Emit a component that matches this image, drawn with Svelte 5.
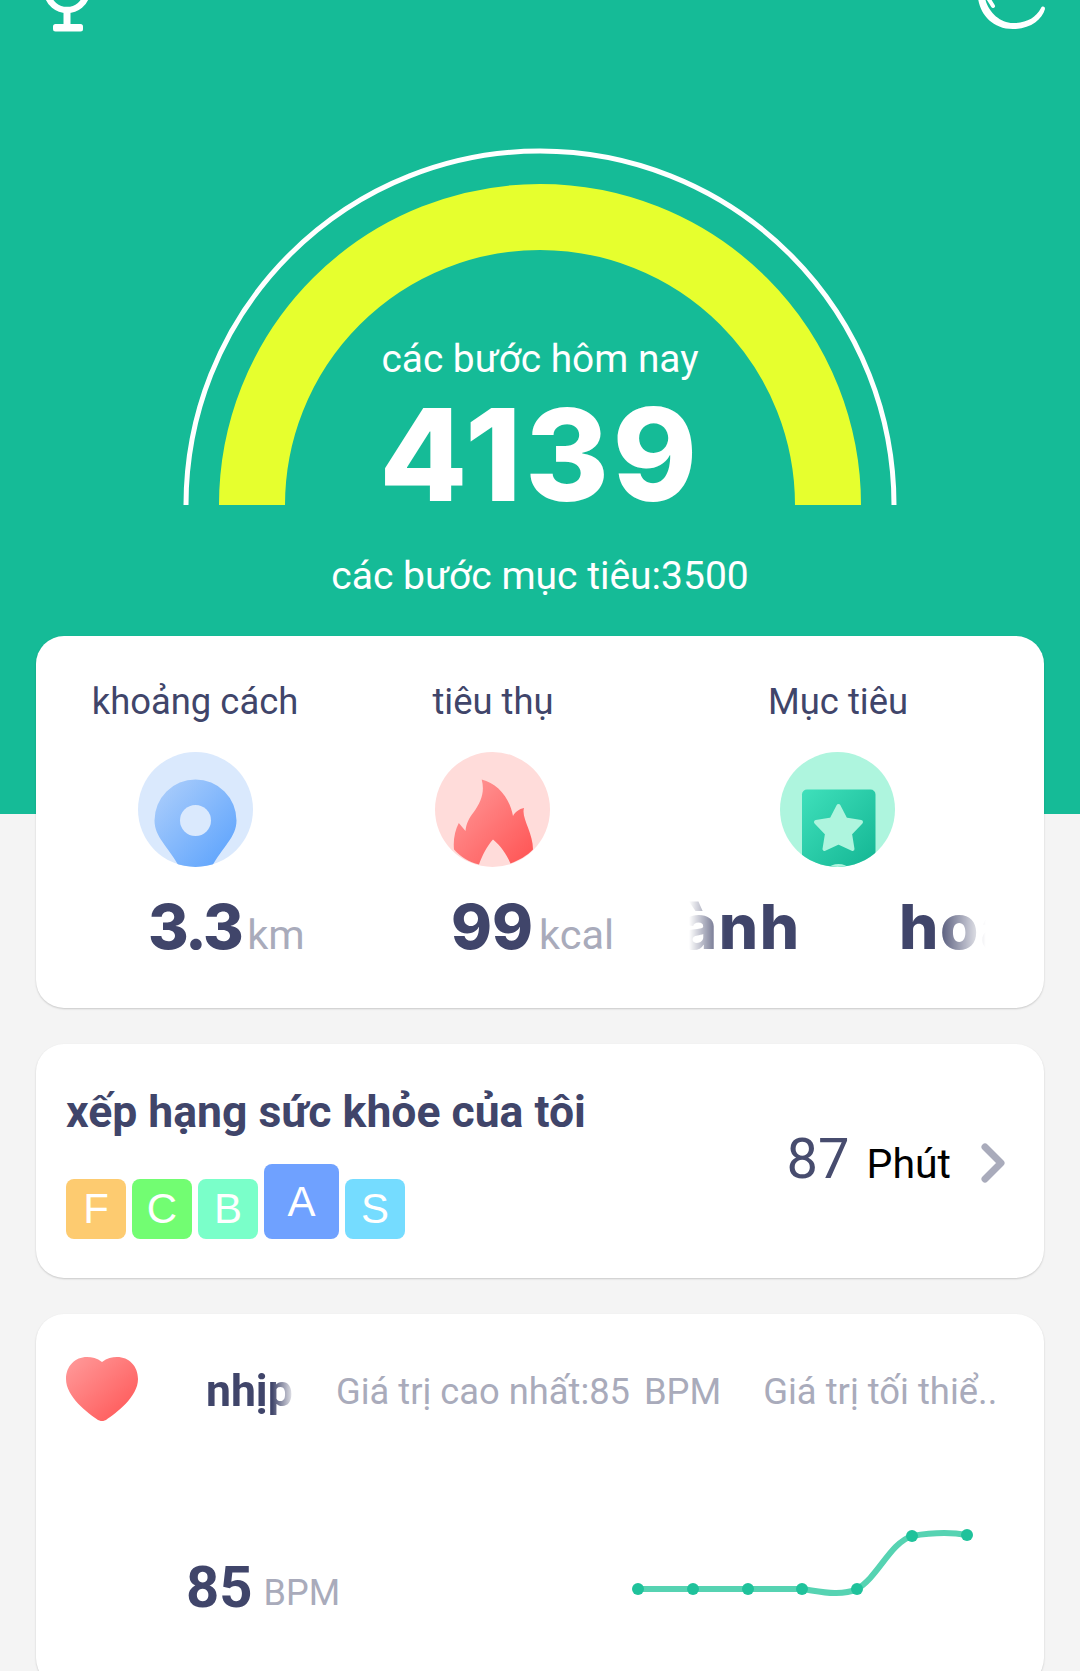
<script>
	const linePts = [
		[10, 64],
		[65, 64],
		[120, 64],
		[174, 64],
		[229, 64],
		[284, 11],
		[339, 10]
	];
</script>

<div class="page">
	<header class="hero">
		<div class="top">
			<svg width="48" height="32" viewBox="0 0 48 32" aria-hidden="true">
				<path d="M4.5 -6 C6 3 14 10 24 10 C34 10 42 3 43.5 -6" fill="none" stroke="#fff" stroke-width="6.5" />
				<path d="M24 10 V26" stroke="#fff" stroke-width="7" />
				<rect x="10" y="24" width="30" height="7.5" rx="2.5" fill="#fff" />
			</svg>
			<svg width="68" height="32" viewBox="0 0 68 32" aria-hidden="true">
				<path d="M0 -2 C2 14 14 29 35 29 C52 29 64 20 67 9 C67 6 64 6 63 8 C58 18 48 23 35 23 C22 23 10 12 7 -2 Z" fill="#fff" />
				<path d="M10 -2 L15 6" stroke="#fff" stroke-width="4" stroke-linecap="round" />
			</svg>
		</div>
		<div class="gauge">
			<svg width="720" height="366" viewBox="0 0 720 366" aria-hidden="true">
				<path d="M6 365 A354 354 0 0 1 714 365" fill="none" stroke="#fff" stroke-width="5" />
				<path d="M72 365 A288 288 0 0 1 648 365" fill="none" stroke="#e6ff2e" stroke-width="66" />
			</svg>
			<div class="gauge-text">
				<div class="today">các bước hôm nay</div>
				<div class="steps">4139</div>
			</div>
		</div>
		<div class="goal">các bước mục tiêu:3500</div>
	</header>

	<main class="cards">
		<section class="card stats">
			<div class="stat">
				<div class="label">khoảng cách</div>
				<svg class="circle" width="115" height="115" viewBox="0 0 115 115" aria-hidden="true">
					<defs>
						<clipPath id="c1"><circle cx="57.5" cy="57.5" r="57.5" /></clipPath>
						<linearGradient id="g1" x1="0" y1="0" x2="1" y2="1">
							<stop offset="0" stop-color="#b0d0fb" />
							<stop offset="1" stop-color="#57a0fd" />
						</linearGradient>
						<linearGradient id="g2" x1="0" y1="0" x2="1" y2="1">
							<stop offset="0" stop-color="#ff9c9c" />
							<stop offset="1" stop-color="#ff5252" />
						</linearGradient>
						<linearGradient id="g3" x1="0" y1="0" x2="1" y2="1">
							<stop offset="0" stop-color="#3fe0bb" />
							<stop offset="1" stop-color="#13b593" />
						</linearGradient>
					</defs>
					<circle cx="57.5" cy="57.5" r="57.5" fill="#dae9fd" />
					<g clip-path="url(#c1)">
						<path d="M57.5 27.5 a41 41 0 0 1 41 41 c0 17 -14 26 -25 47 h-32 c-11 -21 -25 -30 -25 -47 a41 41 0 0 1 41 -41z" fill="url(#g1)" />
						<circle cx="57.5" cy="68.5" r="15.5" fill="#dae9fd" />
					</g>
				</svg>
				<div class="value v1"><b>3.3</b><span>km</span></div>
			</div>
			<div class="stat">
				<div class="label">tiêu thụ</div>
				<svg class="circle" width="115" height="115" viewBox="0 0 115 115" aria-hidden="true">
					<circle cx="57.5" cy="57.5" r="57.5" fill="#ffdcda" />
					<path d="M46.7 27.5 C62 31 75 46 78 64 C80 60 84 57 89 56 C86 66 98 80 98 97.5 C92 104 84 108 75.5 111.5 C72 103 66 94 58 87.5 C52 94 47 104 44 112.5 C34 110 26 105 19 97.5 C18 88 20 78 23.8 71 L30.5 79 C31 72 34 66 38.8 60 C46 50 50 40 46.7 27.5 Z" fill="url(#g2)" />
				</svg>
				<div class="value v2"><b>99</b><span>kcal</span></div>
			</div>
			<div class="stat">
				<div class="label">Mục tiêu</div>
				<svg class="circle" width="115" height="115" viewBox="0 0 115 115" aria-hidden="true">
					<defs>
						<clipPath id="c3"><circle cx="57.5" cy="57.5" r="57.5" /></clipPath>
					</defs>
					<circle cx="57.5" cy="57.5" r="57.5" fill="#aef5de" />
					<g clip-path="url(#c3)">
						<path d="M22 42.5 a5 5 0 0 1 5 -5 h63.5 a5 5 0 0 1 5 5 V116 H22 Z" fill="url(#g3)" />
						<ellipse cx="58.5" cy="116" rx="9" ry="4" fill="#aef5de" />
					</g>
					<path d="M58.5 54 L65.5 67.5 L81 70 L70 81.5 L72.5 97 L58.5 90.5 L44.5 97 L47 81.5 L36 70 L51.5 67.5 Z" fill="#aef5de" stroke="#aef5de" stroke-width="4" stroke-linejoin="round" />
				</svg>
				<div class="marquee"><div class="marquee-in">thành<i></i>hoàn</div></div>
			</div>
		</section>

		<section class="card rank">
			<div>
				<h2>xếp hạng sức khỏe của tôi</h2>
				<div class="badges">
					<span class="badge f">F</span>
					<span class="badge c">C</span>
					<span class="badge b">B</span>
					<span class="badge a">A</span>
					<span class="badge s">S</span>
				</div>
			</div>
			<div class="mins">
				<span class="num">87</span>
				<span class="unit">Phút</span>
				<svg width="24" height="40" viewBox="0 0 24 40" aria-hidden="true">
					<path d="M4 4 L20 20 L4 36" fill="none" stroke="#a9abbb" stroke-width="7" stroke-linecap="round" stroke-linejoin="round" />
				</svg>
			</div>
		</section>

		<section class="card heart">
			<div class="h-row">
				<svg class="heart-ic" width="72" height="64" viewBox="0 0 72 64" aria-hidden="true">
					<defs>
						<linearGradient id="g4" x1="0" y1="0" x2="1" y2="1">
							<stop offset="0" stop-color="#ff9c9c" />
							<stop offset="1" stop-color="#ff5252" />
						</linearGradient>
					</defs>
					<path d="M36 5 C41 1 46 0 51 0 C63 0 72 9 72 22 C72 40 50 56 40 63 C37 64.5 35 64.5 32 63 C22 56 0 40 0 22 C0 9 9 0 21 0 C26 0 31 1 36 5 Z" fill="url(#g4)" />
				</svg>
				<div class="h-name">nhịp</div>
				<div class="h-max">Giá trị cao nhất:85<span>BPM</span></div>
				<div class="h-min">Giá trị tối thiể..</div>
			</div>
			<div class="h-body">
				<div class="bpm"><b>85</b><span>BPM</span></div>
				<svg class="chart" width="350" height="80" viewBox="0 0 350 80" aria-hidden="true">
					<path d="M10 64 H174 C190 66 212 72 229 64 C250 52 262 18 284 11 C302 8 322 7 339 10" fill="none" stroke="#56d3b2" stroke-width="6" />
					{#each linePts as [x, y]}
						<circle cx={x} cy={y} r="6" fill="#1fc29b" />
					{/each}
				</svg>
			</div>
		</section>
	</main>
</div>

<style>
	:global(body) {
		margin: 0;
		background: #f4f4f4;
	}

	.page {
		width: 1080px;
		height: 1671px;
		overflow: hidden;
		font-family: Roboto, "Noto Sans", sans-serif;
		color: #40456a;
	}

	.hero {
		height: 814px;
		background: #15bb97;
		color: #fff;
		text-align: center;
	}

	.top {
		display: flex;
		justify-content: space-between;
		align-items: flex-start;
		padding: 0 34px 0 43px;
		height: 65px;
	}

	.gauge {
		display: grid;
		justify-content: center;
		margin-top: 75px;
	}

	.gauge > * {
		grid-area: 1 / 1;
	}

	.gauge svg {
		display: block;
	}

	.gauge-text {
		padding-top: 196px;
	}

	.today {
		font-size: 38.8px;
		line-height: 46px;
	}

	.steps {
		margin-top: 8px;
		font-family: Inter, sans-serif;
		font-weight: 800;
		font-size: 128px;
		line-height: 130px;
		letter-spacing: 3.5px;
	}

	.goal {
		margin-top: 33px;
		font-size: 39px;
		line-height: 46px;
	}

	.cards {
		display: flex;
		flex-direction: column;
		gap: 36px;
		margin: -178px 36px 0;
		position: relative;
	}

	.card {
		flex: none;
		background: #fff;
		border-radius: 28px;
		box-shadow: 0 1px 2px rgba(0, 0, 0, 0.18);
	}

	.stats {
		display: grid;
		grid-template-columns: 318px 276px 414px;
		height: 372px;
		box-sizing: border-box;
		padding-top: 44px;
	}

	.stat {
		display: flex;
		flex-direction: column;
		align-items: center;
	}

	.label {
		font-size: 36.4px;
		line-height: 44px;
	}

	.stat + .stat .label {
		padding-left: 2px;
	}

	.circle {
		display: block;
		margin-top: 28px;
	}

	.value {
		align-self: flex-start;
		display: flex;
		align-items: baseline;
		margin-top: 24px;
		line-height: 72px;
		white-space: nowrap;
	}

	.v1 {
		padding-left: 112px;
	}

	.v1 b {
		letter-spacing: -2.5px;
	}

	.v2 {
		padding-left: 97px;
	}

	.value b {
		font-family: Inter, sans-serif;
		font-weight: 800;
		font-size: 62px;
	}

	.value span {
		margin-left: 6px;
		font-size: 41.5px;
		color: #a9abbb;
	}

	.marquee {
		width: 297px;
		height: 72px;
		margin-top: 24px;
		overflow: hidden;
		mask-image: linear-gradient(90deg, transparent 0, #000 36px, #000 245px, transparent 297px);
	}

	.marquee-in {
		display: flex;
		margin-left: -74px;
		font-family: Inter, sans-serif;
		font-weight: 800;
		font-size: 62px;
		line-height: 72px;
		letter-spacing: 1.5px;
		white-space: nowrap;
	}

	.marquee-in i {
		width: 98.5px;
		flex: none;
	}

	.rank {
		display: flex;
		justify-content: space-between;
		height: 234px;
		box-sizing: border-box;
		padding: 43px 39px 0 30px;
	}

	h2 {
		margin: 0;
		font-size: 44.5px;
		line-height: 50px;
		font-weight: 700;
	}

	.badges {
		display: flex;
		align-items: flex-end;
		gap: 6px;
		margin-top: 27px;
	}

	.badge {
		display: flex;
		align-items: center;
		justify-content: center;
		width: 60px;
		height: 60px;
		border-radius: 8px;
		color: #fff;
		font-family: "Liberation Sans", Arial, sans-serif;
		font-size: 42px;
	}

	.f {
		background: #fdcb70;
	}

	.c {
		background: #72fd72;
	}

	.b {
		background: #7affc9;
	}

	.a {
		width: 75px;
		height: 75px;
		background: #6fa1ff;
	}

	.s {
		background: #75dcff;
	}

	.mins {
		display: flex;
		align-items: baseline;
		margin-top: 38px;
		line-height: 68px;
		height: 68px;
	}

	.num {
		font-size: 56px;
		color: #474c6e;
	}

	.unit {
		margin-left: 17px;
		font-size: 41px;
		color: #000;
	}

	.mins svg {
		margin-left: 30px;
		align-self: center;
		transform: translateY(4px);
	}

	.heart {
		height: 372px;
		box-sizing: border-box;
		padding-top: 52px;
	}

	.h-row {
		display: flex;
		align-items: center;
		height: 50px;
		padding-left: 30px;
		white-space: nowrap;
	}

	.heart-ic {
		flex: none;
		margin-bottom: 4px;
	}

	.h-name {
		width: 98px;
		margin-left: 68px;
		font-size: 44.5px;
		font-weight: 700;
		line-height: 50px;
		mask-image: linear-gradient(90deg, #000 66px, transparent 90px);
	}

	.h-max {
		margin-left: 32px;
		font-size: 36.3px;
		color: #a9abbb;
	}

	.h-max span {
		margin-left: 14px;
	}

	.h-min {
		margin-left: 42px;
		font-size: 36.4px;
		color: #a9abbb;
	}

	.h-body {
		display: flex;
		justify-content: space-between;
		align-items: flex-start;
		padding: 0 66px 0 150px;
	}

	.bpm {
		display: flex;
		align-items: baseline;
		margin-top: 138px;
		line-height: 66px;
	}

	.bpm b {
		font-size: 58px;
		font-weight: 700;
	}

	.bpm span {
		margin-left: 11px;
		font-size: 36px;
		color: #a9abbb;
		transform: translateY(-2px);
	}

	.chart {
		margin-top: 109px;
	}
</style>
